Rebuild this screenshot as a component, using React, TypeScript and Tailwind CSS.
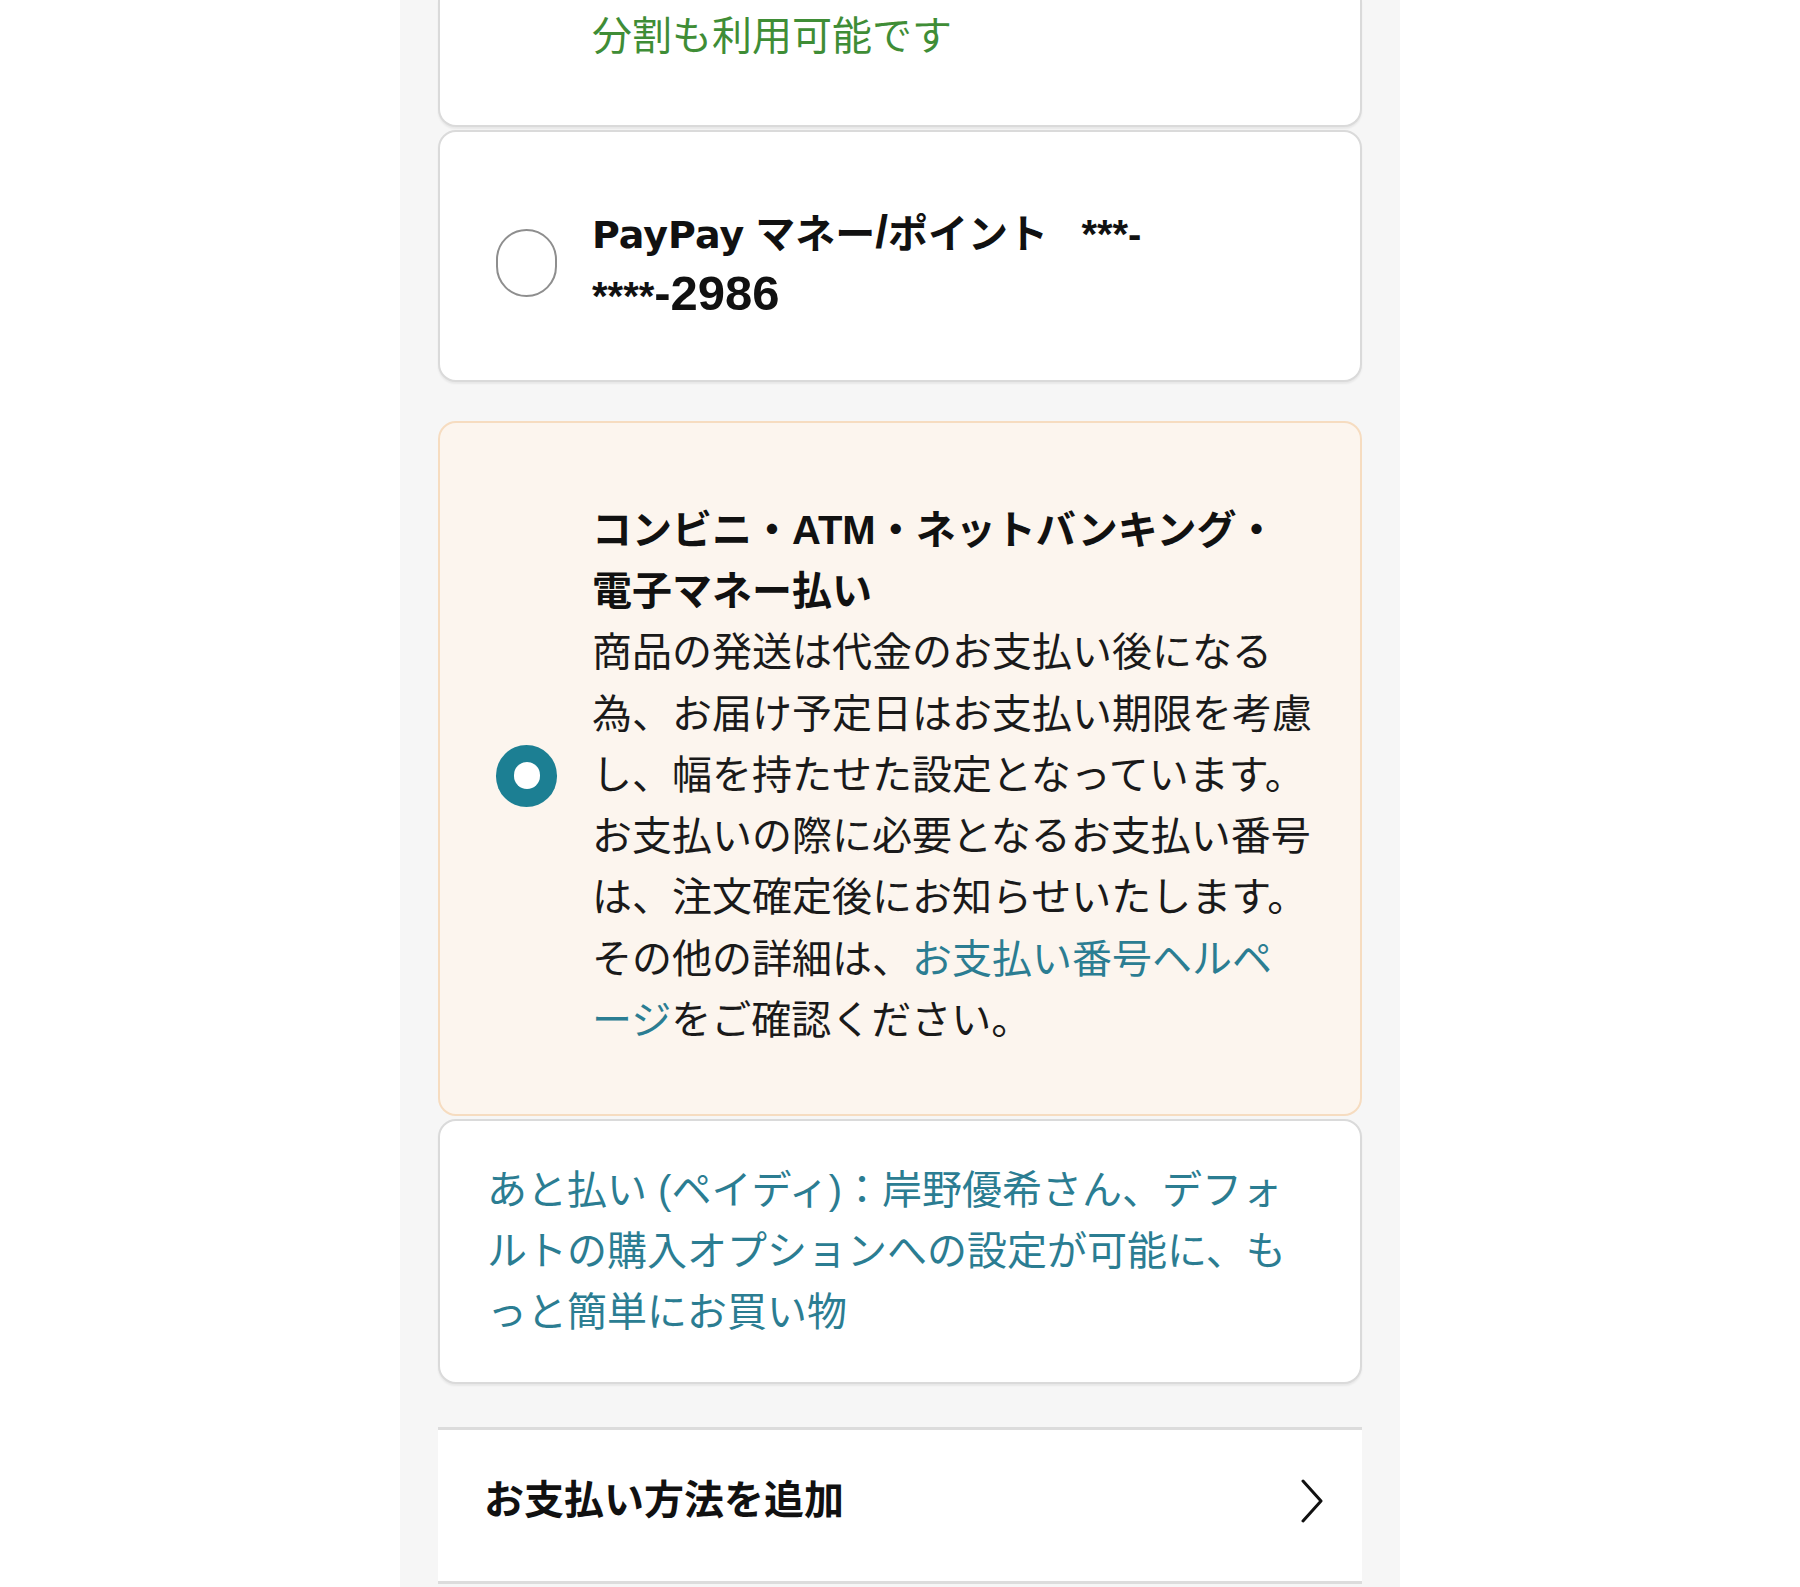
import React from "react";

const font = {
  fontFamily:
    '"Liberation Sans", "Noto Sans CJK JP", "Noto Sans", sans-serif',
};

export default function App() {
  return (
    <div className="w-full h-[1587px] bg-white flex justify-center overflow-hidden" style={font}>
      <div className="w-[1000px] h-full bg-[#f6f6f6] px-[38px] flex flex-col">
        {/* Card 1 (cut off at top) */}
        <div className="h-[127px] bg-white border-2 border-t-0 border-[#dadada] rounded-b-[18px] shadow-[0_2px_2px_rgba(0,0,0,0.06)] pl-[152px] pt-[6px]">
          <p className="text-[40px] leading-[61px] text-[#3f8d36]">分割も利用可能です</p>
        </div>

        {/* Card 2 */}
        <div className="mt-[3px] h-[252px] bg-white border-2 border-[#dadada] rounded-[18px] shadow-[0_2px_2px_rgba(0,0,0,0.06)] pl-[56px] pt-[14px] flex items-center">
          <div className="w-[61px] h-[68px] rounded-full border-2 border-[#8e8e8e] bg-white shrink-0" />
          <div className="ml-[35px] text-[40px] font-semibold text-[#111]">
            <div className="h-[61px] leading-[61px] whitespace-nowrap">
              <span className="text-[38px] font-['DejaVu_Sans',sans-serif]">PayPay</span>
              <span> マネー<span className="text-[46px]">/</span>ポイント&nbsp;&nbsp;&nbsp;***-</span>
            </div>
            <div className="h-[61px] leading-[61px] whitespace-nowrap">
              <span>****</span>
              <span className="text-[49px]">-2986</span>
            </div>
          </div>
        </div>

        {/* Card 3 (selected) */}
        <div className="mt-[39px] h-[695px] bg-[#fcf5ee] border-2 border-[#f6dcc0] rounded-[18px] pl-[56px] pt-[14px] flex items-center">
          <div className="w-[61px] h-[62px] rounded-full bg-[#1c7f93] shrink-0 flex items-center justify-center">
            <div className="w-[26px] h-[27px] rounded-full bg-white" />
          </div>
          <div className="ml-[35px] text-[40px] leading-[61.3px] text-[#1a1a1a]">
            <p className="font-bold text-[#111]">
              コンビニ・ATM・ネットバンキング・
              <br />
              電子マネー払い
            </p>
            <p>
              商品の発送は代金のお支払い後になる
              <br />
              為、お届け予定日はお支払い期限を考慮
              <br />
              し、幅を持たせた設定となっています。
              <br />
              お支払いの際に必要となるお支払い番号
              <br />
              は、注文確定後にお知らせいたします。
              <br />
              その他の詳細は、
              <span className="text-[#2b7d92]">
                お支払い番号ヘルペ
                <br />
                ージ
              </span>
              をご確認ください。
            </p>
          </div>
        </div>

        {/* Card 4 */}
        <div className="mt-[3px] h-[265px] bg-white border-2 border-[#dadada] rounded-[18px] shadow-[0_2px_2px_rgba(0,0,0,0.06)] pl-[47px] flex items-center">
          <p className="text-[40px] leading-[61px] text-[#2b7d92]">
            あと払い (ペイディ)：岸野優希さん、デフォ
            <br />
            ルトの購入オプションへの設定が可能に、も
            <br />
            っと簡単にお買い物
          </p>
        </div>

        {/* Add payment method row */}
        <div className="mt-[43px] h-[157px] bg-white border-y-[3px] border-[#dcdcdc] pl-[46px] pr-[38px] pb-[10px] flex items-center justify-between">
          <p className="text-[40px] leading-[61px] font-bold text-[#111]">お支払い方法を追加</p>
          <svg width="24" height="44" viewBox="0 0 24 44" className="shrink-0">
            <polyline
              points="3,2 21,22 3,42"
              fill="none"
              stroke="#111"
              strokeWidth="3"
              strokeLinecap="round"
              strokeLinejoin="round"
            />
          </svg>
        </div>
      </div>
    </div>
  );
}
